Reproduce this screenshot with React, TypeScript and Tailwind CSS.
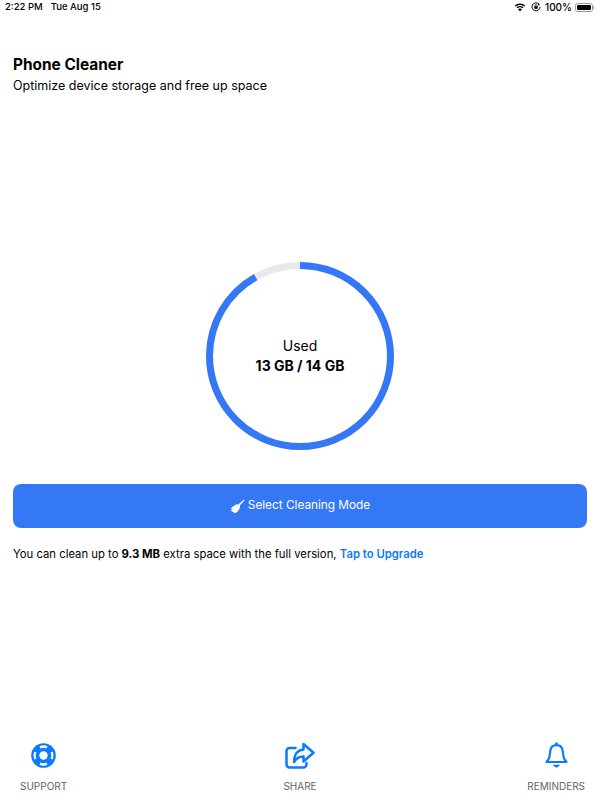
import React from "react";

const BLUE = "#3478f6";
const TINT = "#0a7aff";

function StatusIcons() {
  return (
    <div className="flex items-center gap-[3px]">
      {/* wifi */}
      <svg width="12" height="9" viewBox="0 0 12 9" fill="#000">
        <path d="M6 1.900c1.700 0 3.200.6 4.400 1.700l.8-.9C9.800 1.300 8 .6 6 .6S2.200 1.300.8 2.700l.8.900C2.800 2.500 4.300 1.900 6 1.900z" />
        <path d="M6 4.300c1 0 1.900.4 2.700 1l.8-.9C8.500 3.500 7.300 3 6 3s-2.500.5-3.500 1.400l.8.9c.8-.6 1.700-1 2.700-1z" />
        <path d="M6 5.400c-.8 0-1.400.3-2 .7L6 8.400l2-2.300c-.6-.4-1.200-.7-2-.7z" />
      </svg>
      {/* orientation lock */}
      <svg width="10" height="10" viewBox="0 0 10 10" fill="none" stroke="#000" className="ml-[2px]">
        <path d="M7.900 2.100A4 4 0 1 0 9 5" strokeWidth="1" />
        <path d="M7 .8v2.400h2.200z" fill="#000" stroke="none" />
        <rect x="3.300" y="4.200" width="3.400" height="2.600" fill="#000" stroke="none" />
        <path d="M3.900 4.300V3.700a1.100 1.100 0 0 1 2.200 0v.6" strokeWidth=".7" />
      </svg>
      <span className="ml-[1px] text-[10px] font-medium text-black">100%</span>
      <div className="flex items-center">
        <div className="h-[9px] w-[18px] rounded-[2.500px] border border-[#999] p-[1px]">
          <div className="h-full w-full rounded-[1px] bg-black" />
        </div>
        <div className="h-[3px] w-[1px] rounded-r bg-[#999]" />
      </div>
    </div>
  );
}

function UsageRing() {
  const r = 90.5;
  const circ = 2 * Math.PI * r;
  const used = 0.917;
  return (
    <div className="relative h-[188px] w-[188px]">
      <svg width="188" height="188" viewBox="0 0 188 188" className="-rotate-90">
        <circle cx="94" cy="94" r={r} fill="none" stroke="#e9e9eb" strokeWidth="7" />
        <circle
          cx="94"
          cy="94"
          r={r}
          fill="none"
          stroke={BLUE}
          strokeWidth="7"
          strokeDasharray={`${circ * used} ${circ}`}
        />
      </svg>
      <div className="absolute inset-0 flex flex-col items-center justify-center pb-[1px]">
        <span className="text-[14px] leading-[20px] text-black">Used</span>
        <span className="text-[14px] leading-[20px] font-bold text-black">13 GB / 14 GB</span>
      </div>
    </div>
  );
}

function Broom() {
  return (
    <svg width="15" height="15" viewBox="0 0 15 15" fill="#fff">
      <path d="M13.900.6l.7.7-4.800 5.300c.2.500.3.900.2 1.400-.5 2.400-2 4.600-4.300 6-1.700-.3-3.800-1.400-5.400-3 1.100.1 2.100-.1 2.900-.7-.8 0-1.600-.2-2.300-.6C2.100 8.300 4.200 6.300 6.800 5.300c.5-.1 1-.1 1.500.1z" />
    </svg>
  );
}

function Lifebuoy() {
  return (
    <svg width="25" height="25" viewBox="0 0 25 25">
      <circle cx="12.500" cy="12.500" r="12.300" fill={TINT} />
      <circle cx="12.500" cy="12.500" r="4.200" fill="#fff" />
      <g fill="none" stroke="#fff" strokeWidth="2.400">
        <path d="M9 4.300A8.900 8.900 0 0 1 16 4.300" />
        <path d="M20.700 9A8.900 8.900 0 0 1 20.700 16" />
        <path d="M16 20.700A8.900 8.900 0 0 1 9 20.700" />
        <path d="M4.300 16A8.900 8.900 0 0 1 4.300 9" />
      </g>
    </svg>
  );
}

function ShareBox() {
  return (
    <svg width="30" height="27" viewBox="0 0 30 27" fill="none" stroke={TINT} strokeWidth="2.500" strokeLinejoin="round" strokeLinecap="round">
      <path d="M10.500 6H4.500A3 3 0 0 0 1.500 9v13.500a3 3 0 0 0 3 3h14a3 3 0 0 0 3-3V21" />
      <path d="M18.500 2l10 8.800-10 8.700v-5c-4.500 0-7 1.300-9.500 5.500C9 13.500 12 8 18.500 7.500z" />
    </svg>
  );
}

function Bell() {
  return (
    <svg width="23" height="26" viewBox="0 0 23 26" fill="none" stroke={TINT} strokeWidth="2.200" strokeLinejoin="round">
      <path d="M11.500 3.200c-3.900 0-6 2.800-6.300 6.300-.3 3.800-.7 6.500-2 8.300-.6.800-1.400 1.300-1.700 2.200h20c-.3-.9-1.100-1.400-1.700-2.200-1.300-1.800-1.700-4.500-2-8.300-.3-3.500-2.400-6.300-6.300-6.300z" />
      <circle cx="11.500" cy="1.800" r="1.500" fill={TINT} stroke="none" />
      <path d="M8 22.800h7c-.6 1.500-2 2.600-3.500 2.600S8.600 24.300 8 22.800z" fill={TINT} stroke="none" />
    </svg>
  );
}

function TabItem({ icon, label, className }: { icon: React.ReactNode; label: string; className: string }) {
  return (
    <div className={`flex flex-col items-center ${className}`}>
      <div className="flex h-[30px] items-center justify-center">{icon}</div>
      <span className="mt-[8px] text-[10px] leading-[16px] text-[#636366]">{label}</span>
    </div>
  );
}

export default function App() {
  return (
    <div className="flex h-[800px] w-[600px] flex-col bg-white font-['Inter',sans-serif]">
      {/* Status bar */}
      <div className="flex h-[14px] items-center justify-between pr-[6px] pl-[5px] text-[9.500px] text-black">
        <div className="flex gap-[8px] font-medium">
          <span>2:22 PM</span>
          <span>Tue Aug 15</span>
        </div>
        <StatusIcons />
      </div>

      {/* Header */}
      <div className="mt-[41px] px-[13px]">
        <h1 className="text-[15.400px] leading-[20px] font-bold text-black">Phone Cleaner</h1>
        <p className="mt-[1px] text-[12.500px] leading-[20px] text-black">Optimize device storage and free up space</p>
      </div>

      {/* Ring */}
      <div className="mt-[166px] flex justify-center">
        <UsageRing />
      </div>

      {/* Action */}
      <div className="mt-[34px] px-[13px]">
        <button className="flex h-[44px] w-full items-center justify-center gap-[3px] rounded-[8px] bg-[#3478f6] text-[11.800px] text-white">
          <Broom />
          <span>Select Cleaning Mode</span>
        </button>
        <p className="mt-[17px] text-[11.300px] leading-[18px] text-black">
          You can clean up to <span className="font-bold">9.3 MB</span> extra space with the full version,{" "}
          <span className="font-semibold text-[#0a7aff]">Tap to Upgrade</span>
        </p>
      </div>

      {/* Tab bar */}
      <div className="mt-auto grid grid-cols-3 items-start px-[15px] pb-[6px]">
        <TabItem icon={<Lifebuoy />} label="SUPPORT" className="ml-[5px] justify-self-start" />
        <TabItem icon={<ShareBox />} label="SHARE" className="justify-self-center" />
        <TabItem icon={<Bell />} label="REMINDERS" className="justify-self-end" />
      </div>
    </div>
  );
}
